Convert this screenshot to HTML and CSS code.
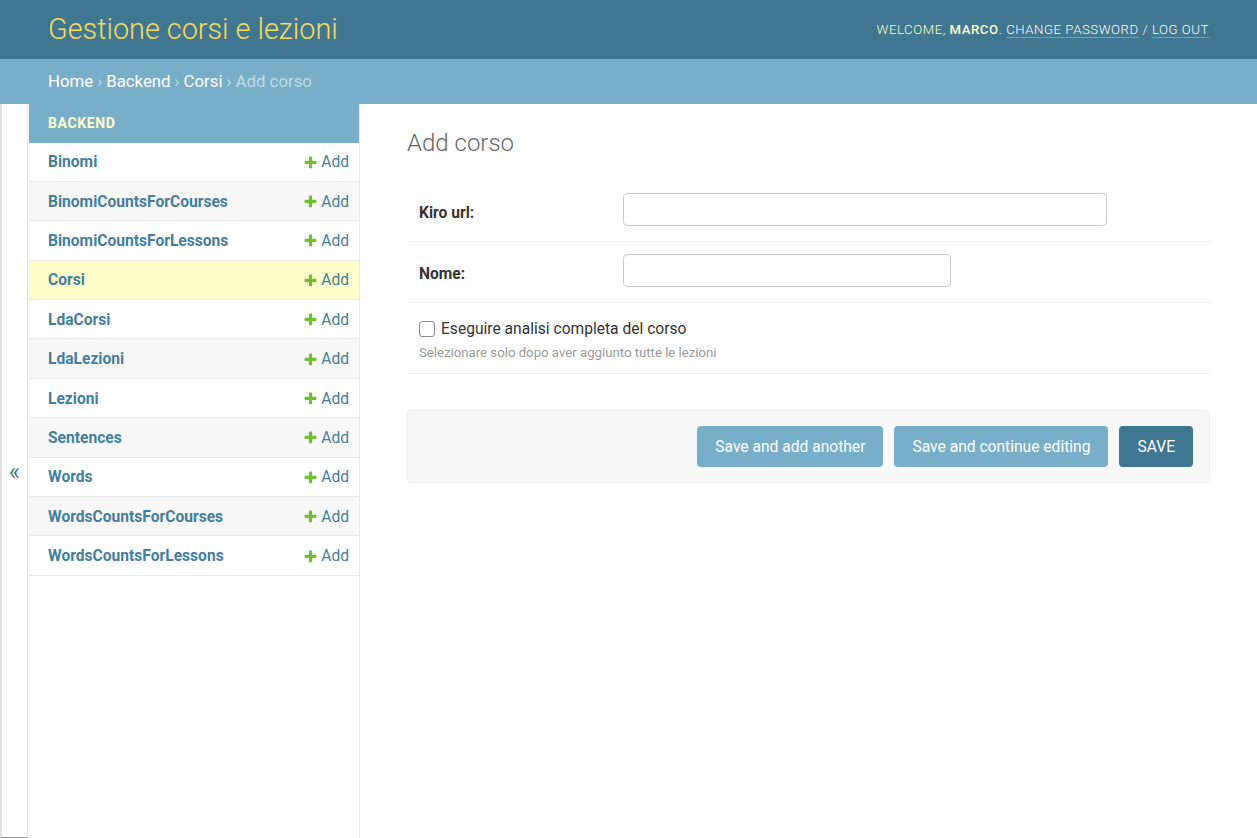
FILE: index.html
```html
<!DOCTYPE html>
<html lang="it">
<head>
<meta charset="utf-8">
<title>Add corso | Gestione corsi e lezioni</title>
<link rel="stylesheet" href="styles.css">
</head>
<body>
<div class="header">
  <div class="site-name">Gestione corsi e lezioni</div>
  <div class="user-tools">Welcome, <strong>marco</strong>. <a href="#">Change password</a> / <a href="#">Log out</a></div>
</div>
<div class="breadcrumbs">
  <a href="#">Home</a><span class="sep">›</span><a href="#">Backend</a><span class="sep">›</span><a href="#">Corsi</a><span class="sep">›</span><span>Add corso</span>
</div>
<div class="main">
  <button class="toggle" type="button">«</button>
  <nav class="sidebar">
    <div class="caption">Backend</div>
    <div class="row"><a class="model" href="#">Binomi</a><a class="add" href="#"><svg viewBox="0 0 1792 1792"><path fill="#70bf2b" d="M1600 796v192q0 40-28 68t-68 28h-416v416q0 40-28 68t-68 28h-192q-40 0-68-28t-28-68v-416h-416q-40 0-68-28t-28-68v-192q0-40 28-68t68-28h416v-416q0-40 28-68t68-28h192q40 0 68 28t28 68v416h416q40 0 68 28t28 68z"/></svg>Add</a></div>
    <div class="row"><a class="model" href="#">BinomiCountsForCourses</a><a class="add" href="#"><svg viewBox="0 0 1792 1792"><path fill="#70bf2b" d="M1600 796v192q0 40-28 68t-68 28h-416v416q0 40-28 68t-68 28h-192q-40 0-68-28t-28-68v-416h-416q-40 0-68-28t-28-68v-192q0-40 28-68t68-28h416v-416q0-40 28-68t68-28h192q40 0 68 28t28 68v416h416q40 0 68 28t28 68z"/></svg>Add</a></div>
    <div class="row"><a class="model" href="#">BinomiCountsForLessons</a><a class="add" href="#"><svg viewBox="0 0 1792 1792"><path fill="#70bf2b" d="M1600 796v192q0 40-28 68t-68 28h-416v416q0 40-28 68t-68 28h-192q-40 0-68-28t-28-68v-416h-416q-40 0-68-28t-28-68v-192q0-40 28-68t68-28h416v-416q0-40 28-68t68-28h192q40 0 68 28t28 68v416h416q40 0 68 28t28 68z"/></svg>Add</a></div>
    <div class="row current"><a class="model" href="#">Corsi</a><a class="add" href="#"><svg viewBox="0 0 1792 1792"><path fill="#70bf2b" d="M1600 796v192q0 40-28 68t-68 28h-416v416q0 40-28 68t-68 28h-192q-40 0-68-28t-28-68v-416h-416q-40 0-68-28t-28-68v-192q0-40 28-68t68-28h416v-416q0-40 28-68t68-28h192q40 0 68 28t28 68v416h416q40 0 68 28t28 68z"/></svg>Add</a></div>
    <div class="row"><a class="model" href="#">LdaCorsi</a><a class="add" href="#"><svg viewBox="0 0 1792 1792"><path fill="#70bf2b" d="M1600 796v192q0 40-28 68t-68 28h-416v416q0 40-28 68t-68 28h-192q-40 0-68-28t-28-68v-416h-416q-40 0-68-28t-28-68v-192q0-40 28-68t68-28h416v-416q0-40 28-68t68-28h192q40 0 68 28t28 68v416h416q40 0 68 28t28 68z"/></svg>Add</a></div>
    <div class="row"><a class="model" href="#">LdaLezioni</a><a class="add" href="#"><svg viewBox="0 0 1792 1792"><path fill="#70bf2b" d="M1600 796v192q0 40-28 68t-68 28h-416v416q0 40-28 68t-68 28h-192q-40 0-68-28t-28-68v-416h-416q-40 0-68-28t-28-68v-192q0-40 28-68t68-28h416v-416q0-40 28-68t68-28h192q40 0 68 28t28 68v416h416q40 0 68 28t28 68z"/></svg>Add</a></div>
    <div class="row"><a class="model" href="#">Lezioni</a><a class="add" href="#"><svg viewBox="0 0 1792 1792"><path fill="#70bf2b" d="M1600 796v192q0 40-28 68t-68 28h-416v416q0 40-28 68t-68 28h-192q-40 0-68-28t-28-68v-416h-416q-40 0-68-28t-28-68v-192q0-40 28-68t68-28h416v-416q0-40 28-68t68-28h192q40 0 68 28t28 68v416h416q40 0 68 28t28 68z"/></svg>Add</a></div>
    <div class="row"><a class="model" href="#">Sentences</a><a class="add" href="#"><svg viewBox="0 0 1792 1792"><path fill="#70bf2b" d="M1600 796v192q0 40-28 68t-68 28h-416v416q0 40-28 68t-68 28h-192q-40 0-68-28t-28-68v-416h-416q-40 0-68-28t-28-68v-192q0-40 28-68t68-28h416v-416q0-40 28-68t68-28h192q40 0 68 28t28 68v416h416q40 0 68 28t28 68z"/></svg>Add</a></div>
    <div class="row"><a class="model" href="#">Words</a><a class="add" href="#"><svg viewBox="0 0 1792 1792"><path fill="#70bf2b" d="M1600 796v192q0 40-28 68t-68 28h-416v416q0 40-28 68t-68 28h-192q-40 0-68-28t-28-68v-416h-416q-40 0-68-28t-28-68v-192q0-40 28-68t68-28h416v-416q0-40 28-68t68-28h192q40 0 68 28t28 68v416h416q40 0 68 28t28 68z"/></svg>Add</a></div>
    <div class="row"><a class="model" href="#">WordsCountsForCourses</a><a class="add" href="#"><svg viewBox="0 0 1792 1792"><path fill="#70bf2b" d="M1600 796v192q0 40-28 68t-68 28h-416v416q0 40-28 68t-68 28h-192q-40 0-68-28t-28-68v-416h-416q-40 0-68-28t-28-68v-192q0-40 28-68t68-28h416v-416q0-40 28-68t68-28h192q40 0 68 28t28 68v416h416q40 0 68 28t28 68z"/></svg>Add</a></div>
    <div class="row"><a class="model" href="#">WordsCountsForLessons</a><a class="add" href="#"><svg viewBox="0 0 1792 1792"><path fill="#70bf2b" d="M1600 796v192q0 40-28 68t-68 28h-416v416q0 40-28 68t-68 28h-192q-40 0-68-28t-28-68v-416h-416q-40 0-68-28t-28-68v-192q0-40 28-68t68-28h416v-416q0-40 28-68t68-28h192q40 0 68 28t28 68v416h416q40 0 68 28t28 68z"/></svg>Add</a></div>
  </nav>
  <div class="content">
    <h1>Add corso</h1>
    <form class="form">
      <div class="form-row">
        <label class="field-label" for="kiro">Kiro url:</label>
        <input class="text-input wide" id="kiro" type="text">
      </div>
      <div class="form-row">
        <label class="field-label" for="nome">Nome:</label>
        <input class="text-input narrow" id="nome" type="text">
      </div>
      <div class="form-row checkbox-row">
        <div class="check-line">
          <input class="check" id="analisi" type="checkbox">
          <label class="check-label" for="analisi">Eseguire analisi completa del corso</label>
        </div>
        <div class="help">Selezionare solo dopo aver aggiunto tutte le lezioni</div>
      </div>
      <div class="submit-row">
        <button class="btn" type="button">Save and add another</button>
        <button class="btn" type="button">Save and continue editing</button>
        <button class="btn default" type="button">Save</button>
      </div>
    </form>
  </div>
</div>
</body>
</html>
```
FILE: styles.css
```css
html, body {
  margin: 0;
  padding: 0;
  background: #fff;
}
body {
  font-family: Roboto, "Liberation Sans", sans-serif;
  color: #333;
}
a {
  text-decoration: none;
}

.header {
  height: 59px;
  box-sizing: border-box;
  padding: 0 48px;
  background: #417690;
  display: flex;
  align-items: center;
  justify-content: space-between;
}
.site-name {
  font-size: 28.8px;
  font-weight: 300;
  color: #f5dd5d;
  line-height: 1;
  margin-top: -1px;
}
.user-tools {
  font-size: 13.2px;
  font-weight: 300;
  letter-spacing: 0.55px;
  text-transform: uppercase;
  color: #ffc;
}
.user-tools strong {
  font-weight: 500;
}
.user-tools a {
  color: #fff;
  border-bottom: 1px solid rgba(255, 255, 255, 0.3);
}

.breadcrumbs {
  height: 45px;
  box-sizing: border-box;
  padding: 0 48px 1px;
  background: #79aec8;
  color: #c4dce8;
  font-size: 16.8px;
  display: flex;
  align-items: center;
}
.breadcrumbs a {
  color: #fff;
}
.breadcrumbs .sep {
  margin: 0 4px;
}

.main {
  display: flex;
  min-height: 734px;
}
.toggle {
  width: 28px;
  flex: none;
  margin: 0;
  padding: 0;
  background: #fff;
  border: none;
  border-left: 2px solid #e2e2e2;
  border-right: 1px solid #e8e8e8;
  border-bottom: 1px solid #939393;
  color: #447e9b;
  font-family: Roboto, "Liberation Sans", sans-serif;
  font-size: 24px;
  line-height: 1;
  padding-top: 3px;
}
.sidebar {
  width: 330px;
  flex: none;
  margin-left: 1px;
  border-right: 1px solid #e8e8e8;
}
.caption {
  height: 38.5px;
  box-sizing: border-box;
  padding-left: 19px;
  background: #79aec8;
  color: #ffc;
  font-size: 14px;
  font-weight: 700;
  letter-spacing: 0.6px;
  text-transform: uppercase;
  display: flex;
  align-items: center;
}
.row {
  height: 39.4px;
  box-sizing: border-box;
  padding: 1px 10px 0 19px;
  border-bottom: 1px solid #e8e8e8;
  display: flex;
  align-items: center;
  justify-content: space-between;
  background: #fff;
}
.row:nth-child(odd) {
  background: #f8f8f8;
}
.row.current {
  background: #ffc;
}
.model {
  color: #447e9b;
  font-size: 15.6px;
  font-weight: 700;
}
.add {
  color: #447e9b;
  font-size: 15.6px;
  display: flex;
  align-items: center;
}
.add svg {
  width: 15px;
  height: 15px;
  margin-right: 3px;
}

.content {
  flex: 1;
  padding: 24px 47px 0 47px;
}
h1 {
  margin: 0 0 23px;
  font-size: 24px;
  line-height: 30px;
  font-weight: 300;
  color: #666;
}
.form-row {
  padding: 12px 12px 15px;
  border-bottom: 1px solid #eee;
  display: flex;
  align-items: center;
}
.field-label {
  width: 204px;
  flex: none;
  margin-top: 6px;
  font-size: 15.6px;
  font-weight: 700;
  color: #333;
}
.text-input {
  height: 33px;
  box-sizing: border-box;
  border: 1px solid #ccc;
  border-radius: 4px;
  padding: 5px 7px;
  margin: 0;
  font-family: Roboto, "Liberation Sans", sans-serif;
  font-size: 15.6px;
}
.text-input.wide {
  width: 484px;
}
.text-input.narrow {
  width: 328px;
}
.checkbox-row {
  display: block;
  padding: 15px 12px 11px;
}
.check-line {
  display: flex;
  align-items: center;
  height: 22px;
}
.check {
  appearance: none;
  -webkit-appearance: none;
  width: 16px;
  height: 16px;
  box-sizing: border-box;
  margin: 0 6px 0 0;
  border: 1px solid #888;
  border-radius: 3px;
  background: #fff;
}
.check-label {
  font-size: 15.6px;
  color: #333;
}
.help {
  margin-top: 4px;
  font-size: 13.2px;
  line-height: 18px;
  color: #999;
}
.submit-row {
  margin-top: 36px;
  padding: 15px 16px;
  background: #f8f8f8;
  border: 1px solid #eee;
  border-radius: 4px;
  display: flex;
  justify-content: flex-end;
  gap: 11px;
}
.btn {
  height: 41px;
  padding: 0 18px;
  margin: 0;
  border: none;
  border-radius: 4px;
  background: #79aec8;
  color: #fff;
  font-family: Roboto, "Liberation Sans", sans-serif;
  font-size: 15.6px;
}
.btn.default {
  background: #417690;
  text-transform: uppercase;
}
```
